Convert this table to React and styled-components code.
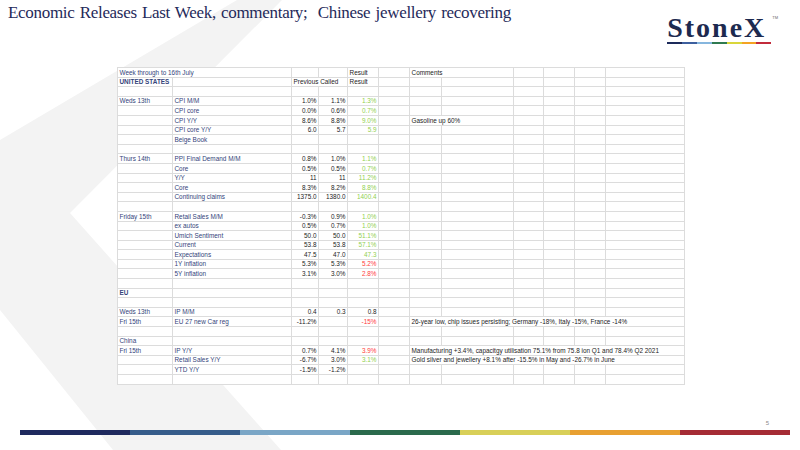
import React from 'react';
import styled, { createGlobalStyle } from 'styled-components';

const GlobalStyle = createGlobalStyle`
  html, body {
    margin: 0;
    padding: 0;
    background: #fff;
  }
`;

const tones = {
  ink: '#1c1c1c',
  label: '#34447a',
  green: '#92d050',
  red: '#ff3b3b',
};

const brandColours = ['#1d2b5b', '#3d5f9e', '#86b6de', '#2f7a50', '#d9d63a', '#f4a323', '#c22b3b'];
const barColours = ['#1f2a5e', '#365c8a', '#7aa6c6', '#2b6a4c', '#d8cf58', '#e8a031', '#a52c35'];
const colWidths = [55, 119, 27, 29, 31, 31, 32, 72, 30, 31, 31, 79];

const rows = [
  {},
  { date: 'Weds 13th', item: 'CPI M/M', prev: '1.0%', called: '1.1%', result: '1.3%', tone: 'green' },
  { item: 'CPI core', prev: '0.0%', called: '0.6%', result: '0.7%', tone: 'green' },
  { item: 'CPI Y/Y', prev: '8.6%', called: '8.8%', result: '9.0%', tone: 'green', comment: 'Gasoline up 60%', span: 2 },
  { item: 'CPI core Y/Y', prev: '6.0', called: '5.7', result: '5.9', tone: 'green' },
  { item: 'Beige Book' },
  {},
  { date: 'Thurs 14th', item: 'PPI Final Demand M/M', prev: '0.8%', called: '1.0%', result: '1.1%', tone: 'green' },
  { item: 'Core', prev: '0.5%', called: '0.5%', result: '0.7%', tone: 'green' },
  { item: 'Y/Y', prev: '11', called: '11', result: '11.2%', tone: 'green' },
  { item: 'Core', prev: '8.3%', called: '8.2%', result: '8.8%', tone: 'green' },
  { item: 'Continuing claims', prev: '1375.0', called: '1380.0', result: '1400.4', tone: 'green' },
  {},
  { date: 'Friday 15th', item: 'Retail Sales M/M', prev: '-0.3%', called: '0.9%', result: '1.0%', tone: 'green' },
  { item: 'ex autos', prev: '0.5%', called: '0.7%', result: '1.0%', tone: 'green' },
  { item: 'Umich Sentiment', prev: '50.0', called: '50.0', result: '51.1%', tone: 'green' },
  { item: 'Current', prev: '53.8', called: '53.8', result: '57.1%', tone: 'green' },
  { item: 'Expectations', prev: '47.5', called: '47.0', result: '47.3', tone: 'green' },
  { item: '1Y inflation', prev: '5.3%', called: '5.3%', result: '5.2%', tone: 'red' },
  { item: '5Y inflation', prev: '3.1%', called: '3.0%', result: '2.8%', tone: 'red' },
  {},
  { date: 'EU', bold: true },
  {},
  { date: 'Weds 13th', item: 'IP M/M', prev: '0.4', called: '0.3', result: '0.8', tone: 'ink' },
  {
    date: 'Fri 15th',
    item: 'EU 27 new Car reg',
    prev: '-11.2%',
    result: '-15%',
    tone: 'red',
    comment: '26-year low, chip issues persisting; Germany -18%, Italy -15%, France -14%',
    span: 6,
  },
  {},
  { date: 'China' },
  {
    date: 'Fri 15th',
    item: 'IP Y/Y',
    prev: '0.7%',
    called: '4.1%',
    result: '3.9%',
    tone: 'red',
    comment: 'Manufacturing +3.4%, capacitgy utilisation 75.1% from 75.8 ion Q1 and 78.4% Q2 2021',
    span: 6,
  },
  {
    item: 'Retail Sales Y/Y',
    prev: '-6.7%',
    called: '3.0%',
    result: '3.1%',
    tone: 'green',
    comment: 'Gold silver and jewellery +8.1% after -15.5% in May and -26.7% in June',
    span: 6,
  },
  { item: 'YTD Y/Y', prev: '-1.5%', called: '-1.2%' },
  {},
];

const Slide = styled.div`
  position: relative;
  width: 800px;
  height: 450px;
  overflow: hidden;
  background: #fff;
  display: flex;
  flex-direction: column;
`;

const Watermark = styled.svg`
  position: absolute;
  top: 0;
  left: 0;
  width: 800px;
  height: 450px;
  z-index: 0;
`;

const Header = styled.header`
  position: relative;
  z-index: 1;
  display: flex;
  justify-content: space-between;
  align-items: flex-start;
  height: 67px;
  padding: 1px 22px 0 8px;
  box-sizing: border-box;
`;

const Title = styled.h1`
  margin: 0;
  font-family: 'Liberation Serif', 'Times New Roman', serif;
  font-weight: normal;
  font-size: 17px;
  line-height: 24px;
  letter-spacing: -0.3px;
  word-spacing: 1.2px;
  color: #1f2a5a;
  white-space: pre;
`;

const Logo = styled.div`
  margin-top: 14px;
  display: flex;
  align-items: flex-start;
`;

const LogoMark = styled.div`
  display: flex;
  flex-direction: column;
  width: 104px;
`;

const LogoWord = styled.span`
  font-family: 'Liberation Serif', 'Times New Roman', serif;
  font-weight: bold;
  font-size: 28px;
  line-height: 25px;
  letter-spacing: 2px;
  color: #1d2a4f;
  white-space: nowrap;
`;

const LogoStrip = styled.div`
  display: flex;
  height: 2px;
  margin-top: 2px;
`;

const StripPiece = styled.span`
  flex: 1;
  background: ${p => p.$colour};
`;

const Trademark = styled.sup`
  font-family: 'Liberation Sans', Arial, sans-serif;
  font-size: 4px;
  line-height: 1;
  color: #666;
  margin: 1px 0 0 1px;
`;

const Sheet = styled.table`
  position: relative;
  z-index: 1;
  margin-left: 117px;
  width: 567px;
  border-collapse: collapse;
  table-layout: fixed;
  background: #fff;
  font-family: 'Liberation Sans', Arial, sans-serif;
  font-size: 6.4px;
`;

const Col = styled.col`
  width: ${p => p.$w}px;
`;

const Row = styled.tr`
  height: 9.6px;
`;

const Cell = styled.td`
  border: 1px solid #dcdcdc;
  padding: 0 1.5px;
  line-height: 8px;
  white-space: nowrap;
  overflow: hidden;
  vertical-align: bottom;
  text-align: ${p => p.$align || 'left'};
  color: ${p => tones[p.$tone || 'ink']};
  font-weight: ${p => (p.$bold ? 700 : 400)};
`;

const Footer = styled.footer`
  position: relative;
  z-index: 1;
  margin-top: auto;
  display: flex;
  flex-direction: column;
  padding: 0 10px 15px 20px;
`;

const PageNumber = styled.span`
  align-self: flex-end;
  margin-right: 21px;
  margin-bottom: 3px;
  font-family: 'Liberation Sans', Arial, sans-serif;
  font-size: 6px;
  line-height: 7px;
  color: #8a8a8a;
`;

const ColourBar = styled.div`
  display: flex;
  height: 5px;
`;

function BlankCells({ count }) {
  return Array.from({ length: count }, (_, i) => <Cell key={i} />);
}

function DataRow({ row }) {
  const commentSpan = row.comment ? row.span : 0;
  return (
    <Row>
      <Cell $tone='label' $bold={row.bold}>{row.date}</Cell>
      <Cell $tone='label'>{row.item}</Cell>
      <Cell $align='right'>{row.prev}</Cell>
      <Cell $align='right'>{row.called}</Cell>
      <Cell $align='right' $tone={row.tone}>{row.result}</Cell>
      <Cell />
      {row.comment && <Cell colSpan={commentSpan}>{row.comment}</Cell>}
      <BlankCells count={6 - commentSpan} />
    </Row>
  );
}

export default function App() {
  return (
    <Slide>
      <GlobalStyle />
      <Watermark viewBox='0 0 800 450'>
        <polygon points='237,0 282,0 70,213 281,450 113,450 0,310 0,140' fill='#f3f3f3' />
      </Watermark>

      <Header>
        <Title>{'Economic Releases Last Week, commentary;  Chinese jewellery recovering'}</Title>
        <Logo>
          <LogoMark>
            <LogoWord>StoneX</LogoWord>
            <LogoStrip>
              {brandColours.map(c => (
                <StripPiece key={c} $colour={c} />
              ))}
            </LogoStrip>
          </LogoMark>
          <Trademark>TM</Trademark>
        </Logo>
      </Header>

      <Sheet>
        <colgroup>
          {colWidths.map((w, i) => (
            <Col key={i} $w={w} />
          ))}
        </colgroup>
        <tbody>
          <Row>
            <Cell colSpan={2} $tone='label'>Week through to 16th July</Cell>
            <Cell />
            <Cell />
            <Cell>Result</Cell>
            <Cell />
            <Cell colSpan={2}>Comments</Cell>
            <BlankCells count={4} />
          </Row>
          <Row>
            <Cell $tone='label' $bold>UNITED STATES</Cell>
            <Cell />
            <Cell colSpan={2}>Previous Called</Cell>
            <Cell>Result</Cell>
            <Cell />
            <BlankCells count={6} />
          </Row>
          {rows.map((row, i) => (
            <DataRow key={i} row={row} />
          ))}
        </tbody>
      </Sheet>

      <Footer>
        <PageNumber>5</PageNumber>
        <ColourBar>
          {barColours.map(c => (
            <StripPiece key={c} $colour={c} />
          ))}
        </ColourBar>
      </Footer>
    </Slide>
  );
}
